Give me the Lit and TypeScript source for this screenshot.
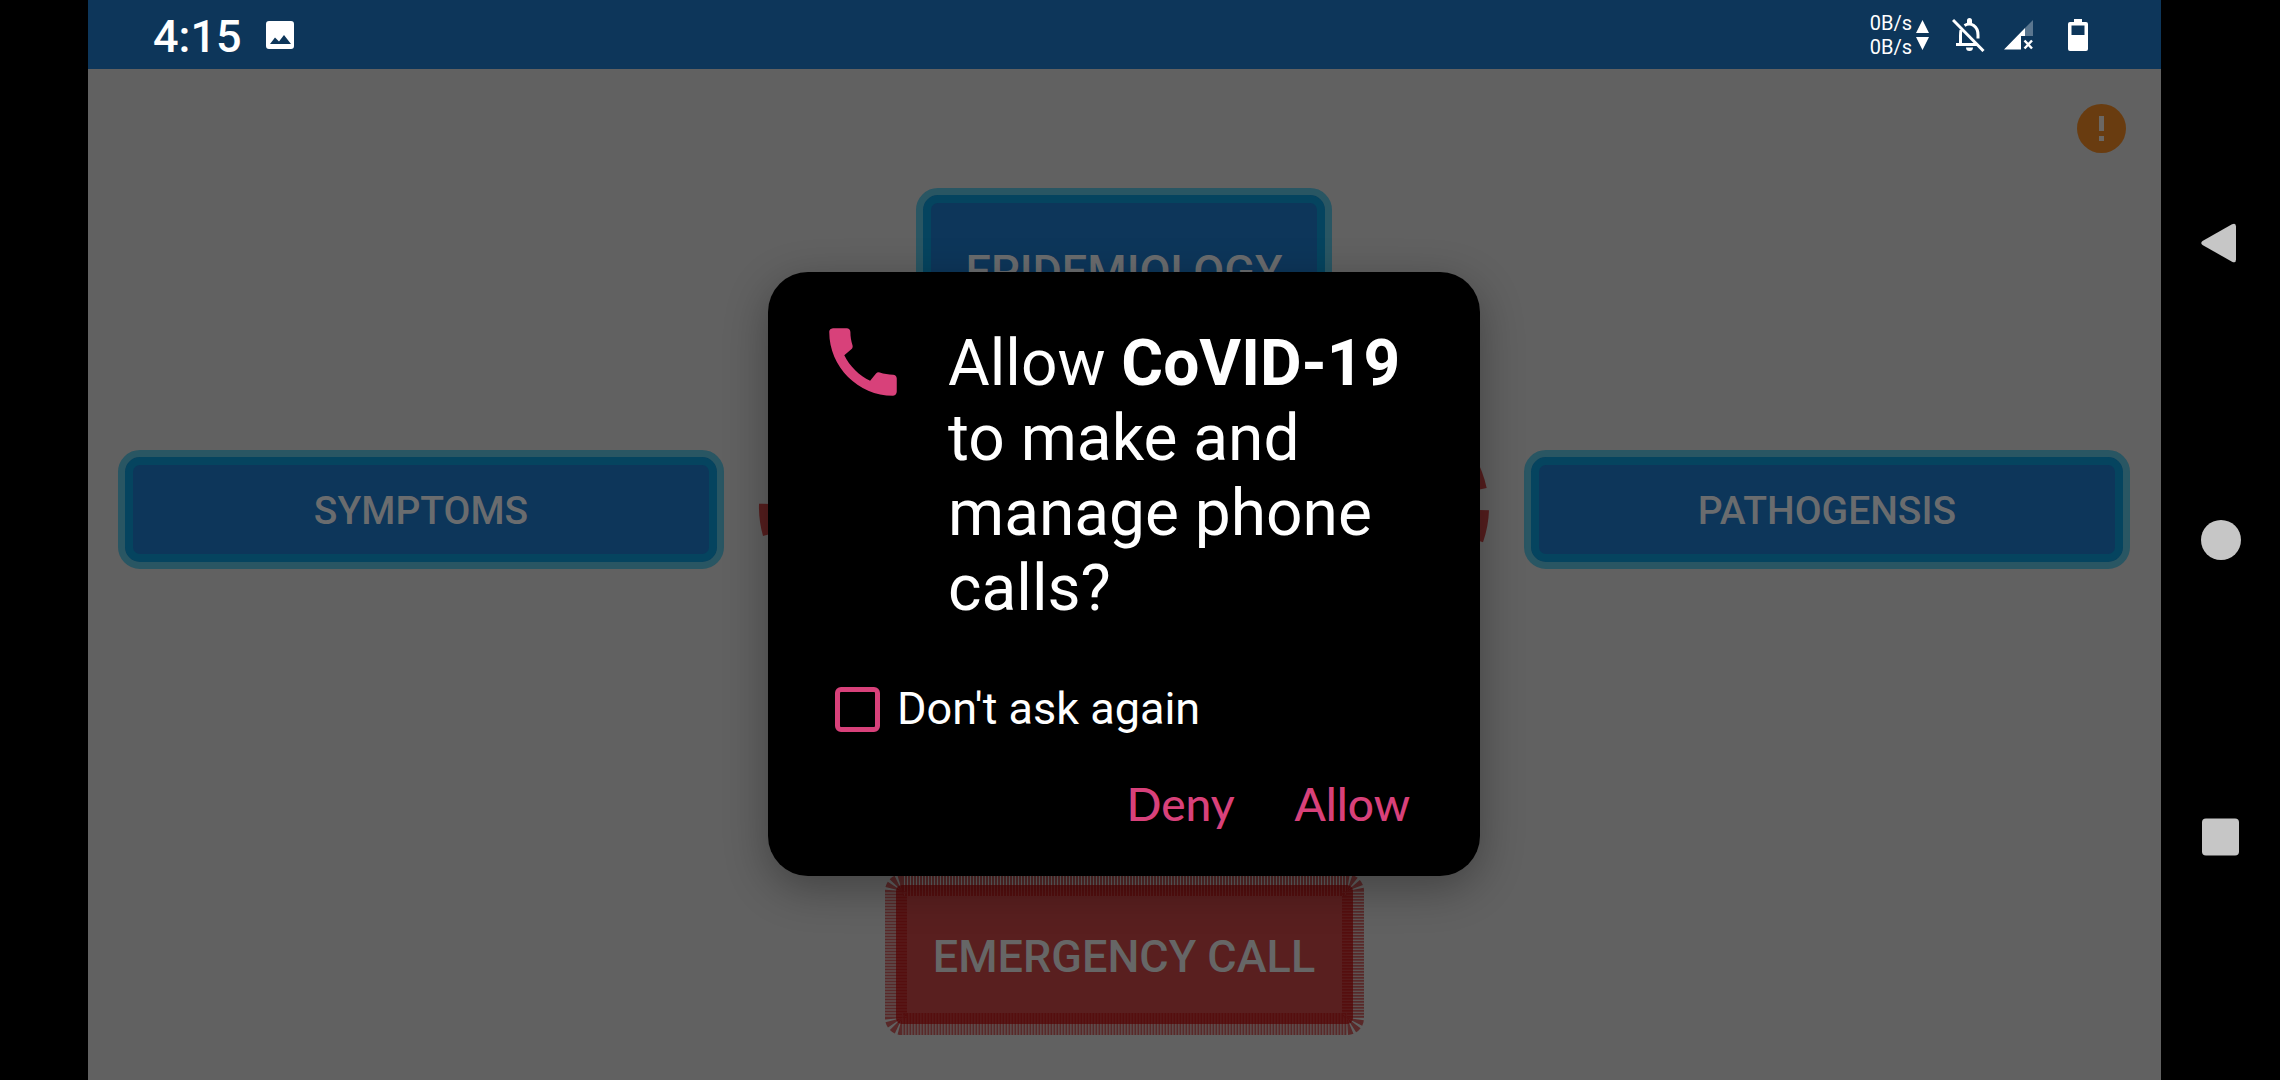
import { LitElement, html, css } from "lit";
import { customElement, state } from "lit/decorators.js";

@customElement("status-bar")
export class StatusBar extends LitElement {
  static styles = css`
    :host {
      display: flex;
      align-items: center;
      justify-content: space-between;
      height: 69px;
      padding: 0 73px 0 65px;
      box-sizing: border-box;
      background: #0d365a;
      color: #fff;
      font-family: Roboto, sans-serif;
    }
    .group {
      display: flex;
      align-items: center;
    }
    .left {
      gap: 24px;
    }
    .time {
      font-size: 45px;
      font-weight: 500;
      line-height: 69px;
      padding-top: 3px;
    }
    .speed {
      display: flex;
      flex-direction: column;
      font-size: 20px;
      line-height: 24px;
      margin-right: 4px;
    }
    .arrows {
      margin-right: 23px;
    }
    .bell {
      margin-right: 19px;
    }
    .signal {
      margin-right: 35px;
    }
    svg {
      display: block;
    }
  `;

  render() {
    return html`
      <div class="group left">
        <span class="time">4:15</span>
        <svg width="28" height="28" viewBox="0 0 28 28" aria-hidden="true">
          <path
            fill="#fff"
            fill-rule="evenodd"
            d="M3 0H25A3 3 0 0 1 28 3V25A3 3 0 0 1 25 28H3A3 3 0 0 1 0 25V3A3 3 0 0 1 3 0ZM4 23H25L18 14L13 20.500L9 16.500Z"
          />
        </svg>
      </div>
      <div class="group">
        <div class="speed"><span>0B/s</span><span>0B/s</span></div>
        <svg class="arrows" width="13" height="30" viewBox="0 0 13 30" aria-hidden="true">
          <path fill="#fff" d="M6.500 0L13 13H0ZM0 17H13L6.500 30Z" />
        </svg>
        <svg class="bell" width="33" height="34" viewBox="0 0 33 34" aria-hidden="true">
          <g fill="none" stroke="#fff" stroke-width="3">
            <path d="M1 2L31.500 33" />
            <path d="M9 12C8.500 14 8.500 16 8.500 18V26.500M4 26.500H25" />
            <path d="M12.500 7.500C19 3.500 26 8.500 26 17V20.500" />
          </g>
          <path
            fill="#fff"
            d="M15 6V2.500A2.500 2.500 0 0 1 20 2.500V6ZM14 29.500H21A3.500 3.500 0 0 1 14 29.500Z"
          />
        </svg>
        <svg class="signal" width="29" height="30" viewBox="0 0 29 30" aria-hidden="true">
          <path fill="#fff" opacity=".32" d="M29 0V16H21V8Z" />
          <path fill="#fff" d="M21 8V16H17V29.500H0Z" />
          <path fill="none" stroke="#fff" stroke-width="2.500" d="M20.500 20.500L28 28.500M28 20.500L20.500 28.500" />
        </svg>
        <svg width="20" height="32" viewBox="0 0 20 32" aria-hidden="true">
          <path
            fill="#fff"
            fill-rule="evenodd"
            d="M6 0H14V3H18A2 2 0 0 1 20 5V30A2 2 0 0 1 18 32H2A2 2 0 0 1 0 30V5A2 2 0 0 1 2 3H6ZM3.500 6.500V16H16.500V6.500Z"
          />
        </svg>
      </div>
    `;
  }
}

@customElement("nav-rail")
export class NavRail extends LitElement {
  static styles = css`
    :host {
      display: flex;
      flex-direction: column;
      align-items: center;
      justify-content: center;
      gap: 257px;
      background: #000;
    }
    button {
      display: block;
      padding: 0;
      border: 0;
      background: none;
    }
    svg {
      display: block;
      fill: #c6c6c6;
    }
  `;

  render() {
    return html`
      <button aria-label="Back">
        <svg width="40" height="40" viewBox="0 0 40 40">
          <path d="M1.500 18L31 1.300Q35 -.5 35 3.500V36.500Q35 40.500 31 38.700L1.500 22Q-1 20 1.500 18Z" />
        </svg>
      </button>
      <button aria-label="Home">
        <svg width="40" height="40" viewBox="0 0 40 40"><circle cx="20" cy="20" r="20" /></svg>
      </button>
      <button aria-label="Recent apps">
        <svg width="40" height="40" viewBox="0 0 40 40">
          <rect x="1" y="1.500" width="37" height="37" rx="4" />
        </svg>
      </button>
    `;
  }
}

@customElement("topic-menu")
export class TopicMenu extends LitElement {
  static styles = css`
    :host {
      display: flex;
      flex-direction: column;
      padding: 35px 31px 45px 30px;
      font-family: Roboto, sans-serif;
    }
    button {
      margin: 0;
      padding: 3px 0 0;
      border: 0;
      background: none;
      font-family: inherit;
      font-weight: 500;
      color: #6a6c6e;
    }
    svg {
      display: block;
    }
    .alert {
      align-self: flex-end;
      margin: 0 4px 35px 0;
      padding: 0;
    }
    .grid {
      flex: 1;
      display: grid;
      grid-template-columns: 1fr 800px 1fr;
      grid-template-rows: 164px 315px 1fr;
      align-items: center;
      justify-items: center;
    }
    .topic {
      width: 100%;
      height: 119px;
      border: 7px solid #295663;
      border-radius: 22px;
      background: #0d365a;
      box-shadow: inset 0 0 0 8px #05445f;
      font-size: 39px;
    }
    .top {
      grid-column: 2;
      width: 416px;
      height: 100%;
      font-size: 45px;
    }
    .left {
      grid-area: 2 / 1;
    }
    .ring {
      grid-area: 2 / 2;
      overflow: visible;
    }
    .right {
      grid-area: 2 / 3;
    }
    .call {
      grid-area: 3 / 2;
      align-self: end;
      position: relative;
      width: 479px;
      height: 161px;
      font-size: 45px;
      color: #666;
    }
    .frame {
      position: absolute;
      inset: 0;
      width: 100%;
      height: 100%;
    }
    .frame rect {
      x: 11px;
      y: 11px;
      width: calc(100% - 22px);
      height: calc(100% - 22px);
      rx: 6px;
      fill: #591f1f;
      stroke: rgba(84, 4, 4, 0.6);
      stroke-width: 22px;
      stroke-dasharray: 2 1;
    }
    .label {
      position: relative;
    }
  `;

  render() {
    return html`
      <button class="alert" aria-label="Alerts">
        <svg width="49" height="49" viewBox="0 0 49 49">
          <circle cx="24.500" cy="24.500" r="24.500" fill="#693c10" />
          <path fill="#6b6763" d="M22 12H27V27H22ZM22 32H27V37H22Z" />
        </svg>
      </button>
      <div class="grid">
        <button class="topic top">EPIDEMIOLOGY</button>
        <button class="topic left">SYMPTOMS</button>
        <svg class="ring" width="730" height="315" viewBox="0 0 730 315" aria-hidden="true">
          <g fill="none" stroke="#571e1e" stroke-width="22">
            <path
              d="M719 158A354 182 0 1 1 11 152"
              pathLength="880"
              stroke-dasharray="30 20"
            />
            <path
              d="M719 158A354 182 0 0 0 365 -24"
              stroke-dasharray="30 20"
              stroke-dashoffset="30"
            />
          </g>
        </svg>
        <button class="topic right">PATHOGENSIS</button>
        <button class="call">
          <svg class="frame" aria-hidden="true"><rect /></svg>
          <span class="label">EMERGENCY CALL</span>
        </button>
      </div>
    `;
  }
}

@customElement("permission-dialog")
export class PermissionDialog extends LitElement {
  @state() private remember = false;

  static styles = css`
    :host {
      display: block;
      width: 712px;
      max-width: 100%;
      box-sizing: border-box;
      padding: 54px 50px 45px;
      border-radius: 40px;
      background: #000;
      color: #fff;
      box-shadow: 0 12px 44px rgba(0, 0, 0, 0.32);
      font-family: Roboto, sans-serif;
    }
    .head {
      display: flex;
      align-items: flex-start;
      gap: 40px;
    }
    .phone {
      flex: none;
      display: block;
      margin-top: -9px;
      fill: #d8417a;
    }
    h1 {
      margin: 0;
      font-size: 64px;
      line-height: 75px;
      font-weight: 400;
    }
    strong {
      font-weight: 700;
    }
    .remember {
      display: flex;
      align-items: center;
      gap: 17px;
      margin: 57px 0 0 17px;
      font-size: 45px;
      line-height: 52px;
    }
    input {
      appearance: none;
      width: 45px;
      height: 45px;
      box-sizing: border-box;
      margin: 0;
      border: 5px solid #d8417a;
      border-radius: 6px;
    }
    input:checked {
      background: #d8417a;
    }
    .actions {
      display: flex;
      justify-content: flex-end;
      gap: 60px;
      margin: 42px 20px 0 0;
    }
    .actions button {
      padding: 0;
      border: 0;
      background: none;
      color: #d8417a;
      font-family: Lato, sans-serif;
      font-size: 46px;
      font-weight: 500;
      line-height: 54px;
    }
  `;

  private toggle(e: Event) {
    this.remember = (e.target as HTMLInputElement).checked;
  }

  render() {
    return html`
      <div class="head">
        <svg class="phone" width="90" height="90" viewBox="0 0 24 24" aria-hidden="true">
          <path
            d="M20.010 15.380c-1.230 0-2.420-.2-3.530-.56a.98.98 0 0 0-1.010.24l-1.570 1.970c-2.830-1.350-5.480-3.900-6.890-6.830l1.950-1.660c.27-.28.35-.67.24-1.020-.37-1.110-.56-2.300-.56-3.530C8.640 3.450 8.190 3 7.650 3H4.190C3.650 3 3 3.240 3 3.990 3 13.280 10.730 21 20.010 21c.71 0 .99-.63.99-1.180v-3.450c0-.54-.45-.99-.99-.99z"
          />
        </svg>
        <h1>Allow <strong>CoVID-19</strong> to make and manage phone calls?</h1>
      </div>
      <label class="remember">
        <input type="checkbox" .checked=${this.remember} @change=${this.toggle} />
        Don't ask again
      </label>
      <div class="actions">
        <button>Deny</button>
        <button>Allow</button>
      </div>
    `;
  }
}

@customElement("app-root")
export class AppRoot extends LitElement {
  static styles = css`
    :host {
      display: grid;
      grid-template-columns: 88px 1fr 119px;
      min-height: 100vh;
      background: #000;
    }
    .screen {
      grid-column: 2;
      display: flex;
      flex-direction: column;
    }
    .stage {
      flex: 1;
      display: flex;
      flex-direction: column;
      position: relative;
      overflow: hidden;
      background: #616161;
    }
    topic-menu {
      flex: 1;
    }
    .overlay {
      position: absolute;
      inset: 0 1px 1px 0;
      display: flex;
      align-items: center;
      justify-content: center;
    }
  `;

  render() {
    return html`
      <div class="screen">
        <status-bar></status-bar>
        <main class="stage">
          <topic-menu></topic-menu>
          <div class="overlay">
            <permission-dialog role="dialog" aria-modal="true"></permission-dialog>
          </div>
        </main>
      </div>
      <nav-rail></nav-rail>
    `;
  }
}
